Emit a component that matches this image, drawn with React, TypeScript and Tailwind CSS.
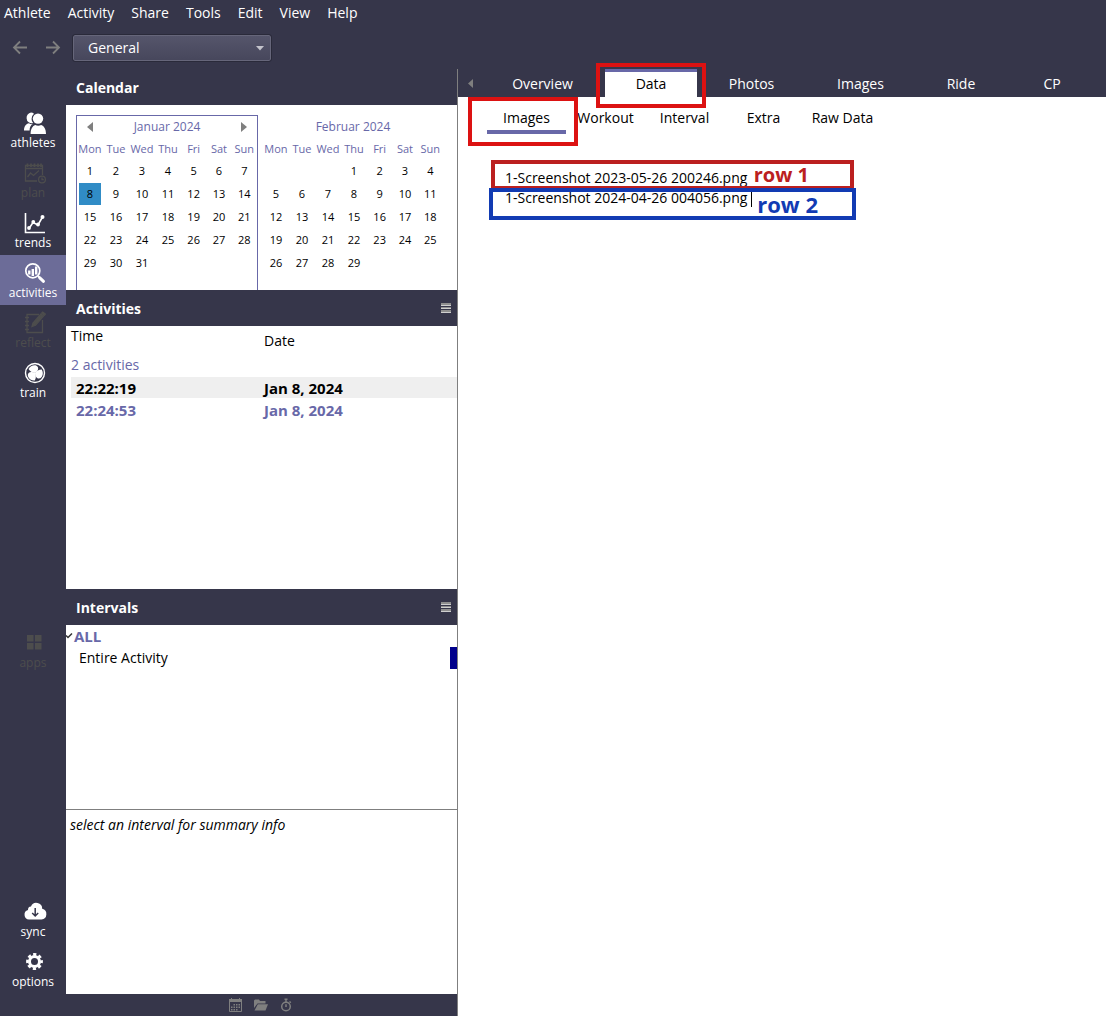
import React from 'react'

type IconProps = { className?: string }

const AthletesIcon = () => (
  <svg width="24" height="24" viewBox="0 0 24 24" fill="currentColor">
    <path d="M8 1.500a5 5 0 0 1 3 1.200a6.500 6.500 0 0 0-2.400 5c0 1.600.5 3 1.600 4.200A5 5 0 0 1 3.600 7.200 5.300 5.300 0 0 1 8 1.500z" />
    <path d="M1 19.500c0-4 2-6.800 5-7.200 1 .7 2.200 1 3.600.8C7.400 14.700 6.600 17 6.600 19.500z" />
    <circle cx="15" cy="7.600" r="5.200" />
    <path d="M7.600 23c0-5 2-8.200 4.600-9 2 .9 4 .9 6 0 2.800.8 4.800 4 4.800 9z" />
  </svg>
)

const PlanIcon = () => (
  <svg width="24" height="24" viewBox="0 0 24 24" fill="none" stroke="currentColor" strokeWidth="1.300">
    <path d="M19.500 14V4.500h-17v15.500H14M2.500 7.500h17" />
    <path d="M4.500 6V2.500M8 6V2.500M11.500 6V2.500M15 6V2.500M18 6V2.500" strokeWidth="1.800" />
    <path d="M4.500 16l3-4 3 2.500 5.500-5" />
    <circle cx="19" cy="18.500" r="3.400" />
    <path d="M19 16.500v2.200h1.800" />
  </svg>
)

const TrendsIcon = () => (
  <svg width="24" height="24" viewBox="0 0 24 24" fill="none" stroke="currentColor" strokeWidth="1.600">
    <path d="M2.500 2v19.500H22" />
    <path d="M6 17.500l4-6 5 2.500 4.500-8" />
    <g fill="currentColor" stroke="none">
      <circle cx="6" cy="17" r="1.900" />
      <circle cx="10.300" cy="11" r="1.900" />
      <circle cx="15" cy="13.500" r="1.900" />
      <circle cx="19.500" cy="6" r="2" />
    </g>
  </svg>
)

const ActivitiesIcon = () => (
  <svg width="24" height="24" viewBox="0 0 24 24" fill="none" stroke="currentColor">
    <circle cx="9.800" cy="9.800" r="7" strokeWidth="1.700" />
    <path d="M15 15l2 2" strokeWidth="2" />
    <path d="M16.800 16.800l3.700 3.500" strokeWidth="3" strokeLinecap="round" />
    <path d="M6.300 9.500v4M9.800 8v7M13.200 5.500v8" strokeWidth="2.400" />
  </svg>
)

const ReflectIcon = () => (
  <svg width="24" height="24" viewBox="0 0 24 24" fill="none" stroke="currentColor" strokeWidth="1.300">
    <path d="M16 3.500H4v18h15.500V9" />
    <path d="M2 6.500h4M2 10.500h4M2 14.500h4M2 18.500h4" />
    <path d="M9 15.500l1-3.500 8-9 2.500 2-8 9.300z" fill="currentColor" />
    <path d="M18.800 2l1-1 2.500 2-1 1.200z" fill="currentColor" />
  </svg>
)

const blade = 'M12 12C9 11.800 6.800 10.300 5.600 8 6.700 5.700 9 4.200 11.600 4.200c2.900 0 4.200 2.400 3.200 4.800-.6 1.400-1.600 2.300-2.800 3z'

const TrainIcon = () => (
  <svg width="24" height="24" viewBox="0 0 24 24" fill="none" stroke="currentColor" strokeWidth="1.400">
    <circle cx="12" cy="12" r="9.500" />
    <g fill="currentColor" stroke="none">
      <path d={blade} />
      <path d={blade} transform="rotate(120 12 12)" />
      <path d={blade} transform="rotate(240 12 12)" />
    </g>
  </svg>
)

const AppsIcon = () => (
  <svg width="24" height="24" viewBox="0 0 24 24" fill="currentColor">
    <path d="M4 4h6.500v6.500H4zM12 4h6.500v6.500H12zM4 12h6.500v6.500H4zM12 12h6.500v6.500H12z" />
  </svg>
)

const SyncIcon = () => (
  <svg width="24" height="24" viewBox="0 0 24 24">
    <path
      fill="currentColor"
      d="M6 19.500a4.800 4.800 0 0 1-1-9.400 3.400 3.400 0 0 1 3-3.600 5.800 5.800 0 0 1 11.200 2.200A5.500 5.500 0 0 1 18.500 19.500z"
    />
    <path d="M12.200 8v8M9.200 13l3 3 3-3" fill="none" stroke="#36364a" strokeWidth="1.500" />
  </svg>
)

const OptionsIcon = () => (
  <svg width="24" height="24" viewBox="0 0 24 24" fill="none" stroke="currentColor">
    <circle cx="11.500" cy="11.500" r="5" strokeWidth="3" />
    <circle cx="11.500" cy="11.500" r="7.100" strokeWidth="2.600" strokeDasharray="3.200 2.376" strokeDashoffset="1.600" />
  </svg>
)

const MenuIcon = () => (
  <svg width="10" height="10" viewBox="0 0 10 10" shapeRendering="crispEdges">
    <path d="M0 0h10v3H0zM0 4h10v2H0zM0 7h10v2H0z" fill="#8e8e8e" />
    <path d="M0 2h10v1H0zM0 5h10v1H0zM0 9h10v1H0z" fill="#cfcfcf" />
  </svg>
)

const ArrowIcon = ({ className }: IconProps) => (
  <svg className={className} width="16" height="16" viewBox="0 0 16 16" fill="none" stroke="#7f7f7f" strokeWidth="1.800">
    <path d="M2 7.500h13M8 1.500L2 7.500l6 6" />
  </svg>
)

const Triangle = ({ className }: IconProps) => (
  <svg className={className} width="6" height="10" viewBox="0 0 6 10">
    <path d="M6 0v10L0 5z" fill="#7f7f7f" />
  </svg>
)

const menus = ['Athlete', 'Activity', 'Share', 'Tools', 'Edit', 'View', 'Help']

type NavItem = { label: string; icon: React.ReactNode; tone: string }

const white = 'text-white'
const dim = 'text-[#4d4d4d]'
const navGroups: NavItem[][] = [
  [
    { label: 'athletes', icon: <AthletesIcon />, tone: white },
    { label: 'plan', icon: <PlanIcon />, tone: dim },
    { label: 'trends', icon: <TrendsIcon />, tone: white },
    { label: 'activities', icon: <ActivitiesIcon />, tone: 'text-white bg-[#6c6c98]' },
    { label: 'reflect', icon: <ReflectIcon />, tone: dim },
    { label: 'train', icon: <TrainIcon />, tone: white },
  ],
  [{ label: 'apps', icon: <AppsIcon />, tone: dim }],
  [
    { label: 'sync', icon: <SyncIcon />, tone: white },
    { label: 'options', icon: <OptionsIcon />, tone: white },
  ],
]

const weekdays = ['Mon', 'Tue', 'Wed', 'Thu', 'Fri', 'Sat', 'Sun']

type MonthProps = { title: string; offset: number; days: number; selected?: number; current?: boolean }

function Month({ title, offset, days, selected, current }: MonthProps) {
  const weeks = Array.from({ length: 5 }, (_, w) =>
    Array.from({ length: 7 }, (_, d) => {
      const n = w * 7 + d - offset + 1
      return n > 0 && n <= days ? n : null
    }),
  )
  return (
    <section className={`w-[182px] border border-b-0 ${current ? 'border-[#6868a8]' : 'border-transparent'}`}>
      <div className="flex h-[22px] items-center justify-between px-[10px]">
        {current ? <button aria-label="Previous month"><Triangle /></button> : <span />}
        <h3 className="text-[12px] text-[#6868a8]">{title}</h3>
        {current ? <button aria-label="Next month"><Triangle className="rotate-180" /></button> : <span />}
      </div>
      <table className="w-full table-fixed border-collapse text-center text-[11px]">
        <colgroup>
          <col className="w-[26px]" />
          <col className="w-[26px]" />
          <col className="w-[26px]" />
          <col className="w-[26px]" />
          <col />
          <col />
          <col />
        </colgroup>
        <thead>
          <tr className="h-[21px] whitespace-nowrap text-[#6868a8]">
            {weekdays.map((d) => (
              <th key={d} className="p-0 text-center font-normal">{d}</th>
            ))}
          </tr>
        </thead>
        <tbody>
          {weeks.map((week, i) => (
            <tr key={i} className="h-[23px]">
              {week.map((n, j) => (
                <td key={j} className="p-0">
                  {n !== null && (
                    <span className={`mx-auto block w-[22px] leading-[22px] ${n === selected ? 'bg-[#308cc6]' : ''}`}>{n}</span>
                  )}
                </td>
              ))}
            </tr>
          ))}
        </tbody>
      </table>
    </section>
  )
}

function PanelHeader({ title, menu }: { title: string; menu?: boolean }) {
  return (
    <header className="flex h-9 shrink-0 items-center justify-between bg-[#36364a] pl-[10px] pr-[6px] text-white">
      <h2 className="pt-px text-[14px] font-bold">{title}</h2>
      {menu && <button aria-label={`${title} menu`}><MenuIcon /></button>}
    </header>
  )
}

const tabs = [
  { label: 'Overview', width: 'w-[125px]' },
  { label: 'Data', width: 'w-[92px]' },
  { label: 'Photos', width: 'w-[109px]' },
  { label: 'Images', width: 'w-[109px]' },
  { label: 'Ride', width: 'w-[92px]' },
  { label: 'CP', width: 'w-[90px]' },
]

const subTabs = ['Images', 'Workout', 'Interval', 'Extra', 'Raw Data']

export default function App() {
  return (
    <div className="flex min-h-screen flex-col bg-[#36364a] font-['Open_Sans','Noto_Sans',sans-serif] text-[14px] leading-5 text-black">
      <nav className="flex h-[26px] items-center gap-[17px] pl-1 text-white">
        {menus.map((m) => (
          <button key={m}>{m}</button>
        ))}
      </nav>
      <div className="flex h-[43px] items-center pl-3">
        <button aria-label="Back"><ArrowIcon /></button>
        <button aria-label="Forward" className="ml-[17px]"><ArrowIcon className="-scale-x-100" /></button>
        <div className="relative ml-3">
          <select
            aria-label="Perspective"
            className="h-[26px] w-[198px] appearance-none rounded-xs border border-[#66667a] bg-linear-to-b from-[#55556b] to-[#47475c] pl-[14px] text-white outline outline-[#2a2a3a]"
          >
            <option>General</option>
          </select>
          <svg className="pointer-events-none absolute right-[7px] top-[11px]" width="8" height="5" viewBox="0 0 8 5">
            <path d="M0 0h8L4 4.500z" fill="#c4c4cc" />
          </svg>
        </div>
      </div>

      <div className="flex flex-1">
        <aside className="flex w-[66px] shrink-0 flex-col justify-between pb-[22px] pt-9">
          {navGroups.map((group, i) => (
            <div key={i}>
              {group.map(({ label, icon, tone }) => (
                <button key={label} className={`flex h-[50px] w-full flex-col items-center pt-[6px] text-[12px] leading-[15px] ${tone}`}>
                  <span className="pl-1">{icon}</span>
                  <span>{label}</span>
                </button>
              ))}
            </div>
          ))}
        </aside>

        <div className="flex w-[391px] shrink-0 flex-col bg-white">
          <PanelHeader title="Calendar" />
          <div className="flex h-[185px] shrink-0 gap-1 pl-[10px] pt-[10px]">
            <Month title="Januar 2024" offset={0} days={31} selected={8} current />
            <Month title="Februar 2024" offset={3} days={29} />
          </div>

          <PanelHeader title="Activities" menu />
          <div className="flex-[263]">
            <div className="pl-[5px]">
              <table className="w-full table-fixed text-left">
                <thead>
                  <tr className="h-[29px] align-top">
                    <th className="w-[193px] p-0 font-normal">Time</th>
                    <th className="p-0 pt-[5px] font-normal">Date</th>
                  </tr>
                </thead>
                <tbody>
                  <tr className="h-[22px] align-top text-[#6868a8]">
                    <td className="p-0" colSpan={2}>2 activities</td>
                  </tr>
                  <tr className="h-[21px] bg-[#efefef] text-[15px] font-bold">
                    <td className="py-0 pl-[5px]">22:22:19</td>
                    <td className="p-0">Jan 8, 2024</td>
                  </tr>
                  <tr className="h-[23px] text-[15px] font-bold text-[#6868a8]">
                    <td className="py-0 pl-[5px]">22:24:53</td>
                    <td className="p-0">Jan 8, 2024</td>
                  </tr>
                </tbody>
              </table>
            </div>
          </div>

          <PanelHeader title="Intervals" menu />
          <div className="flex-[184]">
            <button className="flex h-[22px] items-center text-[15px] font-bold text-[#6868a8]">
              <svg width="8" height="6" viewBox="0 0 8 6" fill="none" stroke="#333" strokeWidth="1.500">
                <path d="M0 2.500L2 4.500 6 .5" />
              </svg>
              ALL
            </button>
            <div className="flex h-[22px] items-center justify-between pl-[13px]">
              <span>Entire Activity</span>
              <span className="h-full w-[7px] bg-[#00008b]" />
            </div>
          </div>
          <div className="flex-[184] border-t border-[#7f7f7f]">
            <p className="pl-1 pt-[5px] italic">select an interval for summary info</p>
          </div>
          <footer className="flex h-[22px] items-center justify-center gap-3 bg-[#36364a] pr-[2px] text-[#7f7f7f]">
            <button aria-label="Calendar">
              <svg width="13" height="14" viewBox="0 0 13 14">
                <path d="M0 1h2V0h1v1h7V0h1v1h2v3H0z" fill="currentColor" />
                <path d="M.5 4v9.500h12V4" fill="none" stroke="currentColor" />
                <path d="M4.500 6h1.500v1.500H4.500zM7 6h1.500v1.500H7zM9.500 6H11v1.500H9.500zM2 8.500h1.500V10H2zM4.500 8.500h1.500V10H4.500zM7 8.500h1.500V10H7zM9.500 8.500H11V10H9.500zM2 11h1.500v1.500H2zM4.500 11h1.500v1.500H4.500zM7 11h1.500v1.500H7z" fill="currentColor" />
              </svg>
            </button>
            <button aria-label="Open">
              <svg width="14" height="12" viewBox="0 0 14 12" fill="currentColor">
                <path d="M0 9V1.500L1 .5h4l1 1.500h5.500v2.500H3.500z" />
                <path d="M3.800 5.200H14L11.500 11.500H.5z" />
              </svg>
            </button>
            <button aria-label="Timer">
              <svg width="12" height="14" viewBox="0 0 12 14" fill="none" stroke="currentColor" strokeWidth="1.500">
                <circle cx="6" cy="8.500" r="4.300" />
                <path d="M4.500 1.200h3M6 1v3M6 6.200V9M9.500 3.500l1.300 1.300" />
              </svg>
            </button>
          </footer>
        </div>

        <main className="min-w-0 flex-1 border-l border-[#7f7f7f] bg-white">
          <div className="flex h-7 bg-[#36364a] text-white">
            <button aria-label="Scroll tabs left" className="w-[22px] shrink-0 pl-[10px]">
              <svg width="5" height="9" viewBox="0 0 5 9"><path d="M5 0v9L0 4.500z" fill="#7f7f7f" /></svg>
            </button>
            {tabs.map(({ label, width }) =>
              label === 'Data' ? (
                <div key={label} className={`relative flex shrink-0 ${width}`}>
                  <button className="w-full border-t-[3px] border-[#6868a8] bg-white pb-px text-black">{label}</button>
                  <span className="pointer-events-none absolute -inset-x-[9px] -top-[6px] -bottom-[11px] border-4 border-[#dc1212]" />
                </div>
              ) : (
                <button key={label} className={`shrink-0 pt-[2px] ${width}`}>{label}</button>
              ),
            )}
          </div>
          <div className="flex h-[37px] pl-[29px]">
            {subTabs.map((label) => (
              <div key={label} className="relative flex w-[79px] shrink-0">
                <button
                  className={`w-full whitespace-nowrap border-b-4 pt-[11px] pb-[2px] ${label === 'Images' ? 'border-[#6868a8]' : 'border-transparent'}`}
                >
                  {label}
                </button>
                {label === 'Images' && (
                  <span className="pointer-events-none absolute top-0 -bottom-3 -left-[19px] -right-3 z-10 border-4 border-[#dc1212]" />
                )}
              </div>
            ))}
          </div>
          <div className="relative ml-[31px] mt-[26px] w-[367px] max-w-full">
            <textarea
              aria-label="Images"
              rows={2}
              spellCheck={false}
              defaultValue={'1-Screenshot 2023-05-26 200246.png\n1-Screenshot 2024-04-26 004056.png'}
              className="block w-[280px] resize-none overflow-hidden whitespace-pre pl-4 pt-2 leading-5 outline-none"
            />
            <span className="absolute left-[262px] top-[32px] h-[15px] w-px bg-black" />
            <div className="pointer-events-none absolute top-0 left-[2px] flex h-[30px] w-[363px] items-center justify-end border-4 border-[#bb2020] pr-[41px] text-[20px] font-bold text-[#bb2020]">
              row 1
            </div>
            <div className="pointer-events-none absolute left-0 top-[28px] flex h-8 w-[367px] items-center justify-end border-4 border-[#123bb3] pr-[34px] text-[22px] font-bold text-[#123bb3]">
              row 2
            </div>
          </div>
        </main>
      </div>
    </div>
  )
}
